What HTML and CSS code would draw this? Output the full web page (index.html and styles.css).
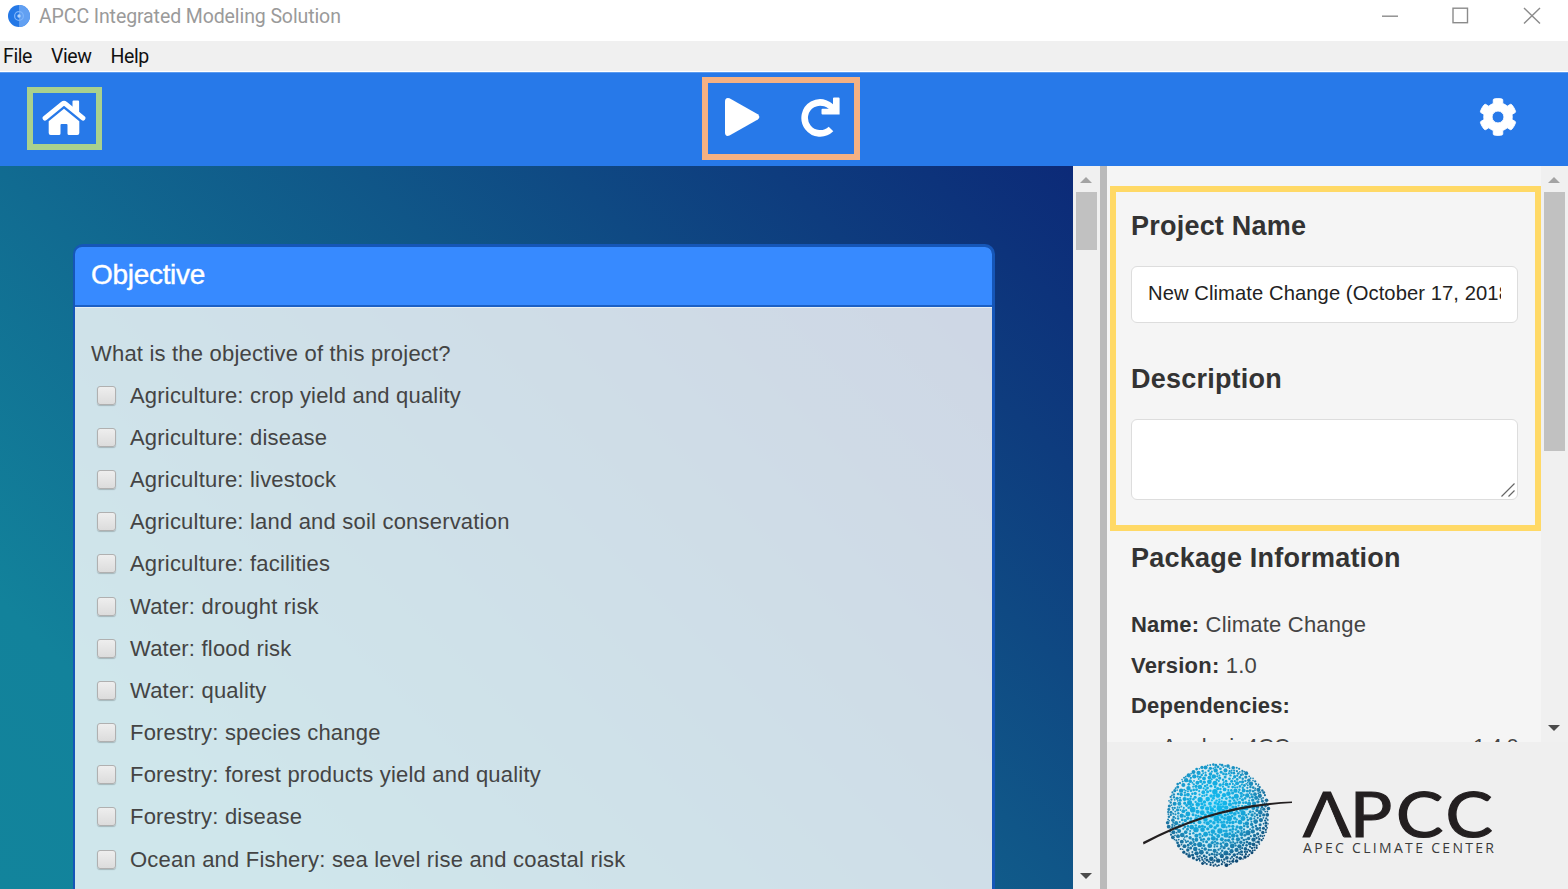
FILE: index.html
```html
<!DOCTYPE html>
<html lang="en">
<head>
<meta charset="utf-8">
<title>APCC Integrated Modeling Solution</title>
<link rel="stylesheet" href="styles.css">
</head>
<body>
<div class="window">
  <header class="titlebar">
    <svg class="app-icon" width="22" height="22" viewBox="0 0 22 22">
      <circle cx="11" cy="11" r="11" fill="#2478e6"/>
      <path d="M11 0a11 11 0 0 1 0 22z" fill="#62a0f2"/>
      <circle cx="11" cy="11" r="4.4" fill="none" stroke="#7db4fa" stroke-width="1.3"/>
      <circle cx="11" cy="11" r="1.7" fill="#b5d4fb"/>
    </svg>
    <span class="app-title">APCC Integrated Modeling Solution</span>
    <svg class="controls" width="160" height="18" viewBox="0 0 160 18" fill="none" stroke="#8b8b8b" stroke-width="1.4">
      <path d="M0 9.2h16"/>
      <rect x="71" y="1.200" width="14.500" height="14.500"/>
      <path d="M142 1l16 15.500M158 1l-16 15.500"/>
    </svg>
  </header>
  <nav class="menubar"><span>File</span><span>View</span><span>Help</span></nav>
  <div class="toolbar">
    <div class="home-box">
      <svg width="44" height="36" viewBox="0 0 44 36" fill="#fff">
        <path d="M30.500 1.500q0-1 1-1h4.600q1 0 1 1v13l-6.600-5.500z"/>
        <path d="M3 18.200L20.500 3.800q1.500-1.200 3 0L41 18.200" fill="none" stroke="#fff" stroke-width="4.800" stroke-linecap="round" stroke-linejoin="round"/>
        <path d="M22 8.800L37.300 21.200V33q0 2-2 2H27q-1.500 0-1.500-1.500V25q0-1-1-1h-5q-1 0-1 1v8.500q0 1.500-1.500 1.500H8.700q-2 0-2-2V21.200z"/>
      </svg>
    </div>
    <div class="run-box">
      <svg width="36" height="40" viewBox="0 0 36 40" fill="#fff">
        <path d="M0 4.500Q0 0 4.500 1.200L32.800 17.200Q36 20 32.800 22.600L4.500 38.600Q0 40 0 35.500z"/>
      </svg>
      <svg width="40" height="40" viewBox="0 0 40 40">
        <path d="M33.500 15A15.500 15.500 0 1 0 30 32" fill="none" stroke="#fff" stroke-width="6.600"/>
        <path d="M32 1.400q0-1 1-1h4.600q1 0 1 1v16h-17.100q-1 0-1-1v-3.600q0-1 1-1H32z" fill="#fff"/>
      </svg>
    </div>
    <svg class="gear" width="38" height="38" viewBox="0 0 512 512" fill="#fff" stroke="#fff" stroke-width="12">
      <path d="M487.400 315.700l-42.600-24.600c4.300-23.200 4.300-47 0-70.200l42.600-24.600c4.900-2.800 7.100-8.600 5.500-14-11.100-35.600-30-67.800-54.700-94.600-3.800-4.100-10-5.100-14.800-2.300L380.800 110c-17.900-15.400-38.500-27.300-60.800-35.100V25.800c0-5.600-3.900-10.500-9.400-11.700-36.700-8.200-74.300-7.800-109.200 0-5.500 1.200-9.400 6.100-9.400 11.700V75c-22.200 7.900-42.800 19.800-60.800 35.100L88.700 85.500c-4.900-2.800-11-1.900-14.800 2.300-24.700 26.700-43.600 58.900-54.700 94.600-1.700 5.400.6 11.200 5.500 14L67.300 221c-4.300 23.200-4.300 47 0 70.200l-42.600 24.600c-4.900 2.800-7.100 8.600-5.500 14 11.100 35.600 30 67.800 54.700 94.600 3.800 4.100 10 5.100 14.800 2.300l42.600-24.600c17.900 15.400 38.500 27.300 60.800 35.100v49.200c0 5.600 3.900 10.500 9.400 11.700 36.700 8.200 74.300 7.800 109.200 0 5.500-1.200 9.400-6.100 9.400-11.700v-49.200c22.200-7.900 42.800-19.800 60.800-35.100l42.600 24.600c4.900 2.800 11 1.900 14.800-2.300 24.700-26.700 43.600-58.900 54.700-94.600 1.500-5.500-.7-11.300-5.600-14.100zM256 336c-44.100 0-80-35.900-80-80s35.900-80 80-80 80 35.900 80 80-35.900 80-80 80z"/>
    </svg>
  </div>
  <div class="main">
    <section class="canvas">
      <div class="card">
        <h1 class="card-head">Objective</h1>
        <div class="card-body">
          <p class="question">What is the objective of this project?</p>
          <label class="option"><i class="box"></i>Agriculture: crop yield and quality</label>
          <label class="option"><i class="box"></i>Agriculture: disease</label>
          <label class="option"><i class="box"></i>Agriculture: livestock</label>
          <label class="option"><i class="box"></i>Agriculture: land and soil conservation</label>
          <label class="option"><i class="box"></i>Agriculture: facilities</label>
          <label class="option"><i class="box"></i>Water: drought risk</label>
          <label class="option"><i class="box"></i>Water: flood risk</label>
          <label class="option"><i class="box"></i>Water: quality</label>
          <label class="option"><i class="box"></i>Forestry: species change</label>
          <label class="option"><i class="box"></i>Forestry: forest products yield and quality</label>
          <label class="option"><i class="box"></i>Forestry: disease</label>
          <label class="option"><i class="box"></i>Ocean and Fishery: sea level rise and coastal risk</label>
        </div>
      </div>
    </section>
    <div class="scrollbar">
      <i class="arrow up"></i><i class="thumb thumb-main"></i><i class="arrow down"></i>
    </div>
    <div class="divider"></div>
    <aside class="side">
      <div class="side-scroll">
        <div class="details">
          <div class="highlight"></div>
          <h2 class="name-title">Project Name</h2>
          <div class="field"><span class="field-text">New Climate Change (October 17, 2018)</span></div>
          <h2 class="desc-title">Description</h2>
          <div class="area">
            <svg width="14" height="14" viewBox="0 0 14 14" stroke="#666" stroke-width="1.200"><path d="M.5 13.500l13-13M7.500 13.500l6-6"/></svg>
          </div>
          <h2 class="pkg-title">Package Information</h2>
          <div class="info">
            <p><b>Name:</b> Climate Change</p>
            <p><b>Version:</b> 1.0</p>
            <p><b>Dependencies:</b></p>
            <p class="dep"><span>Analysis4CC</span><span class="dep-version">1.4.0</span></p>
          </div>
        </div>
        <div class="scrollbar">
          <i class="arrow up"></i><i class="thumb thumb-side"></i><i class="arrow down"></i>
        </div>
      </div>
      <footer class="brand">
        <svg width="461" height="147" viewBox="1107 742 461 147">
          <defs>
            <radialGradient id="ocean" gradientUnits="userSpaceOnUse" cx="1214" cy="803" r="66">
              <stop offset="0" stop-color="#10bbf0"/>
              <stop offset=".5" stop-color="#17a3d6"/>
              <stop offset=".75" stop-color="#1c78a6"/>
              <stop offset="1" stop-color="#0d3d66"/>
            </radialGradient>
            <radialGradient id="glow">
              <stop offset="0" stop-color="#8adcf7"/>
              <stop offset=".5" stop-color="#bfe8f5"/>
              <stop offset="1" stop-color="#e4eef2"/>
            </radialGradient>
          </defs>
          <circle cx="1218" cy="815" r="51.500" fill="url(#glow)"/>
          <g id="globe" fill="url(#ocean)"></g>
          <path d="M1143 842Q1174 826 1205 816Q1246 803 1292 801.500V803Q1246 806 1206 818Q1174 828 1143.500 844.500z" fill="#231f20"/>
          <text class="logo-name" transform="translate(1303 837) scale(1.14 1)" x="0 41 81.500 125">APCC</text>
          <path d="M1327 799.500L1309.500 839H1343.500z" fill="#efefef"/>
          <text class="logo-sub" x="1303" y="853" textLength="191">APEC CLIMATE CENTER</text>
        </svg>
      </footer>
    </aside>
  </div>
</div>
<script src="globe.js"></script>
</body>
</html>
```
FILE: styles.css
```css
* { box-sizing: border-box; }
body { margin: 0; font-family: "Liberation Sans", Arial, sans-serif; color: #444; }
h1, h2, p { margin: 0; }
.window { display: flex; flex-direction: column; width: 1568px; height: 889px; overflow: hidden; background: #fff; }

.titlebar { display: flex; align-items: center; height: 41px; padding: 0 26px 9px 8px; }
.app-icon { flex: none; }
.app-title { margin: 1px 0 0 9px; font: 400 19.500px Roboto, sans-serif; color: #9a9a9a; letter-spacing: -.1px; }
.controls { margin-left: auto; }

.menubar { display: flex; gap: 19px; height: 31px; padding-left: 3px; background: #f0f0f0; border-bottom: 1px solid #fff; font: 400 19.500px/31px Roboto, sans-serif; letter-spacing: -.4px; color: #111; }

.toolbar { display: flex; justify-content: space-between; flex: none; height: 94px; padding: 5px 51px 0 27px; background: #2779e9; border-top: 1px solid #5b9bf0; }
.home-box { width: 75px; height: 63px; margin-top: 9px; padding: 7px 0 0 9px; border: 6px solid #a9d18e; }
.run-box { display: flex; gap: 40px; width: 158px; height: 83px; margin: -1px 0 0 -19px; padding: 14px 0 0 17px; border: 6px solid #f4b183; }
.gear { margin-top: 20px; }

.main { display: flex; flex: 1; min-height: 0; }
.canvas { width: 1073px; height: 723px; padding: 78px 0 0 73px; overflow: hidden; background: linear-gradient(225deg, #0c2a78 0%, #0e3c7e 17%, #105688 40%, #116b91 60%, #12829b 84%, #12849c 100%); }
.card { width: 922px; height: 720px; border: 2px solid #1556b8; border-width: 3px 3px 0 2px; border-radius: 10px 10px 0 0; }
.card-head { height: 60px; padding-left: 16px; background: #378aff; border-bottom: 2px solid #1c60c4; border-radius: 7px 7px 0 0; font-size: 28px; font-weight: 400; line-height: 56px; letter-spacing: -.3px; color: #fff; -webkit-text-stroke: .4px #fff; }
.card-body { height: 660px; padding: 24.600px 16px 0; background: rgba(255, 255, 255, .8); border-top: 1px solid #e6eff5; font-size: 22px; letter-spacing: .2px; }
.question { line-height: 42.170px; }
.option { display: flex; align-items: center; height: 42.170px; padding-left: 6px; }
.box { width: 19px; height: 19px; margin: -1px 14px 0 0; border: 1px solid #b0b0b0; border-radius: 3px; background: linear-gradient(#eee, #dcdcdc); box-shadow: 0 1px 1px rgba(0, 0, 0, .2); }

.scrollbar { display: flex; flex-direction: column; align-items: center; width: 27px; flex: none; padding-right: 1px; background: #f0f0f0; }
.arrow { border: 6px solid transparent; }
.up { margin-top: 5px; border-bottom-color: #a3a3a3; }
.down { margin-top: auto; margin-bottom: 4px; border-top-color: #4b4b4b; }
.side .down { margin-bottom: 5px; }
.thumb { width: 21px; margin-top: 9px; background: #c1c1c1; }
.thumb-main { height: 58px; }
.thumb-side { height: 259px; }
.divider { width: 7px; background: #bababa; }

.side { display: flex; flex-direction: column; width: 461px; }
.side-scroll { display: flex; height: 576px; overflow: hidden; background: #f5f5f5; }
.details { position: relative; width: 434px; padding: 42px 23px 0 24px; }
.highlight { position: absolute; left: 3px; top: 20px; width: 431px; height: 345px; border: 6px solid #ffd966; }
.details h2 { font-size: 27px; line-height: 36px; letter-spacing: .22px; color: #333; }
.field { height: 57px; margin-top: 22px; padding: 0 16px; border: 1px solid #ddd; border-radius: 6px; background: #fff; }
.field-text { display: block; overflow: hidden; white-space: nowrap; font-size: 20.200px; line-height: 52px; letter-spacing: .08px; color: #222; }
.details .desc-title { margin-top: 38px; }
.area { display: flex; align-items: flex-end; justify-content: flex-end; height: 81px; margin-top: 22px; padding: 2px; border: 1px solid #ddd; border-radius: 6px; background: #fff; }
.details .pkg-title { margin-top: 40px; }
.info { margin-top: 29px; font-size: 22px; line-height: 40.700px; letter-spacing: .2px; }
.info b { color: #333; letter-spacing: .2px; }
.dep { display: flex; justify-content: space-between; padding-left: 31px; }
.dep-version { letter-spacing: -.8px; }
.brand { flex: none; height: 147px; background: #efefef; }
.logo-name { font: 400 62px Lato, sans-serif; fill: #231f20; stroke: #231f20; stroke-width: 1.200px; }
.logo-sub { font: 400 14px "Open Sans", sans-serif; fill: #3a3a3a; }
```
FILE: globe.js
```js
// Packs the globe with irregular dots that shrink towards its rim.
const globe = document.getElementById("globe");
let seed = 11;
const rand = () => (seed = (seed * 16807) % 2147483647) / 2147483647;
const dots = [];
for (let i = 0; i < 14000; i++) {
  const angle = rand() * Math.PI * 2;
  const t = Math.sqrt(rand());
  const size = i < 1500 ? 1.2 + rand() * 1.5 : 0.9 + rand() * 0.6;
  const r = size * (1.12 - 0.42 * t * t);
  const x = Math.cos(angle) * t * 51;
  const y = Math.sin(angle) * t * 51;
  const gap = t * 0.2;
  if (dots.some(d => Math.hypot(d.x - x, d.y - y) < d.r + r + gap)) continue;
  dots.push({ x, y, r });
  const dot = document.createElementNS("http://www.w3.org/2000/svg", "circle");
  dot.setAttribute("cx", (1218 + x).toFixed(2));
  dot.setAttribute("cy", (815 + y).toFixed(2));
  dot.setAttribute("r", (r + 0.15).toFixed(2));
  globe.appendChild(dot);
}
```
